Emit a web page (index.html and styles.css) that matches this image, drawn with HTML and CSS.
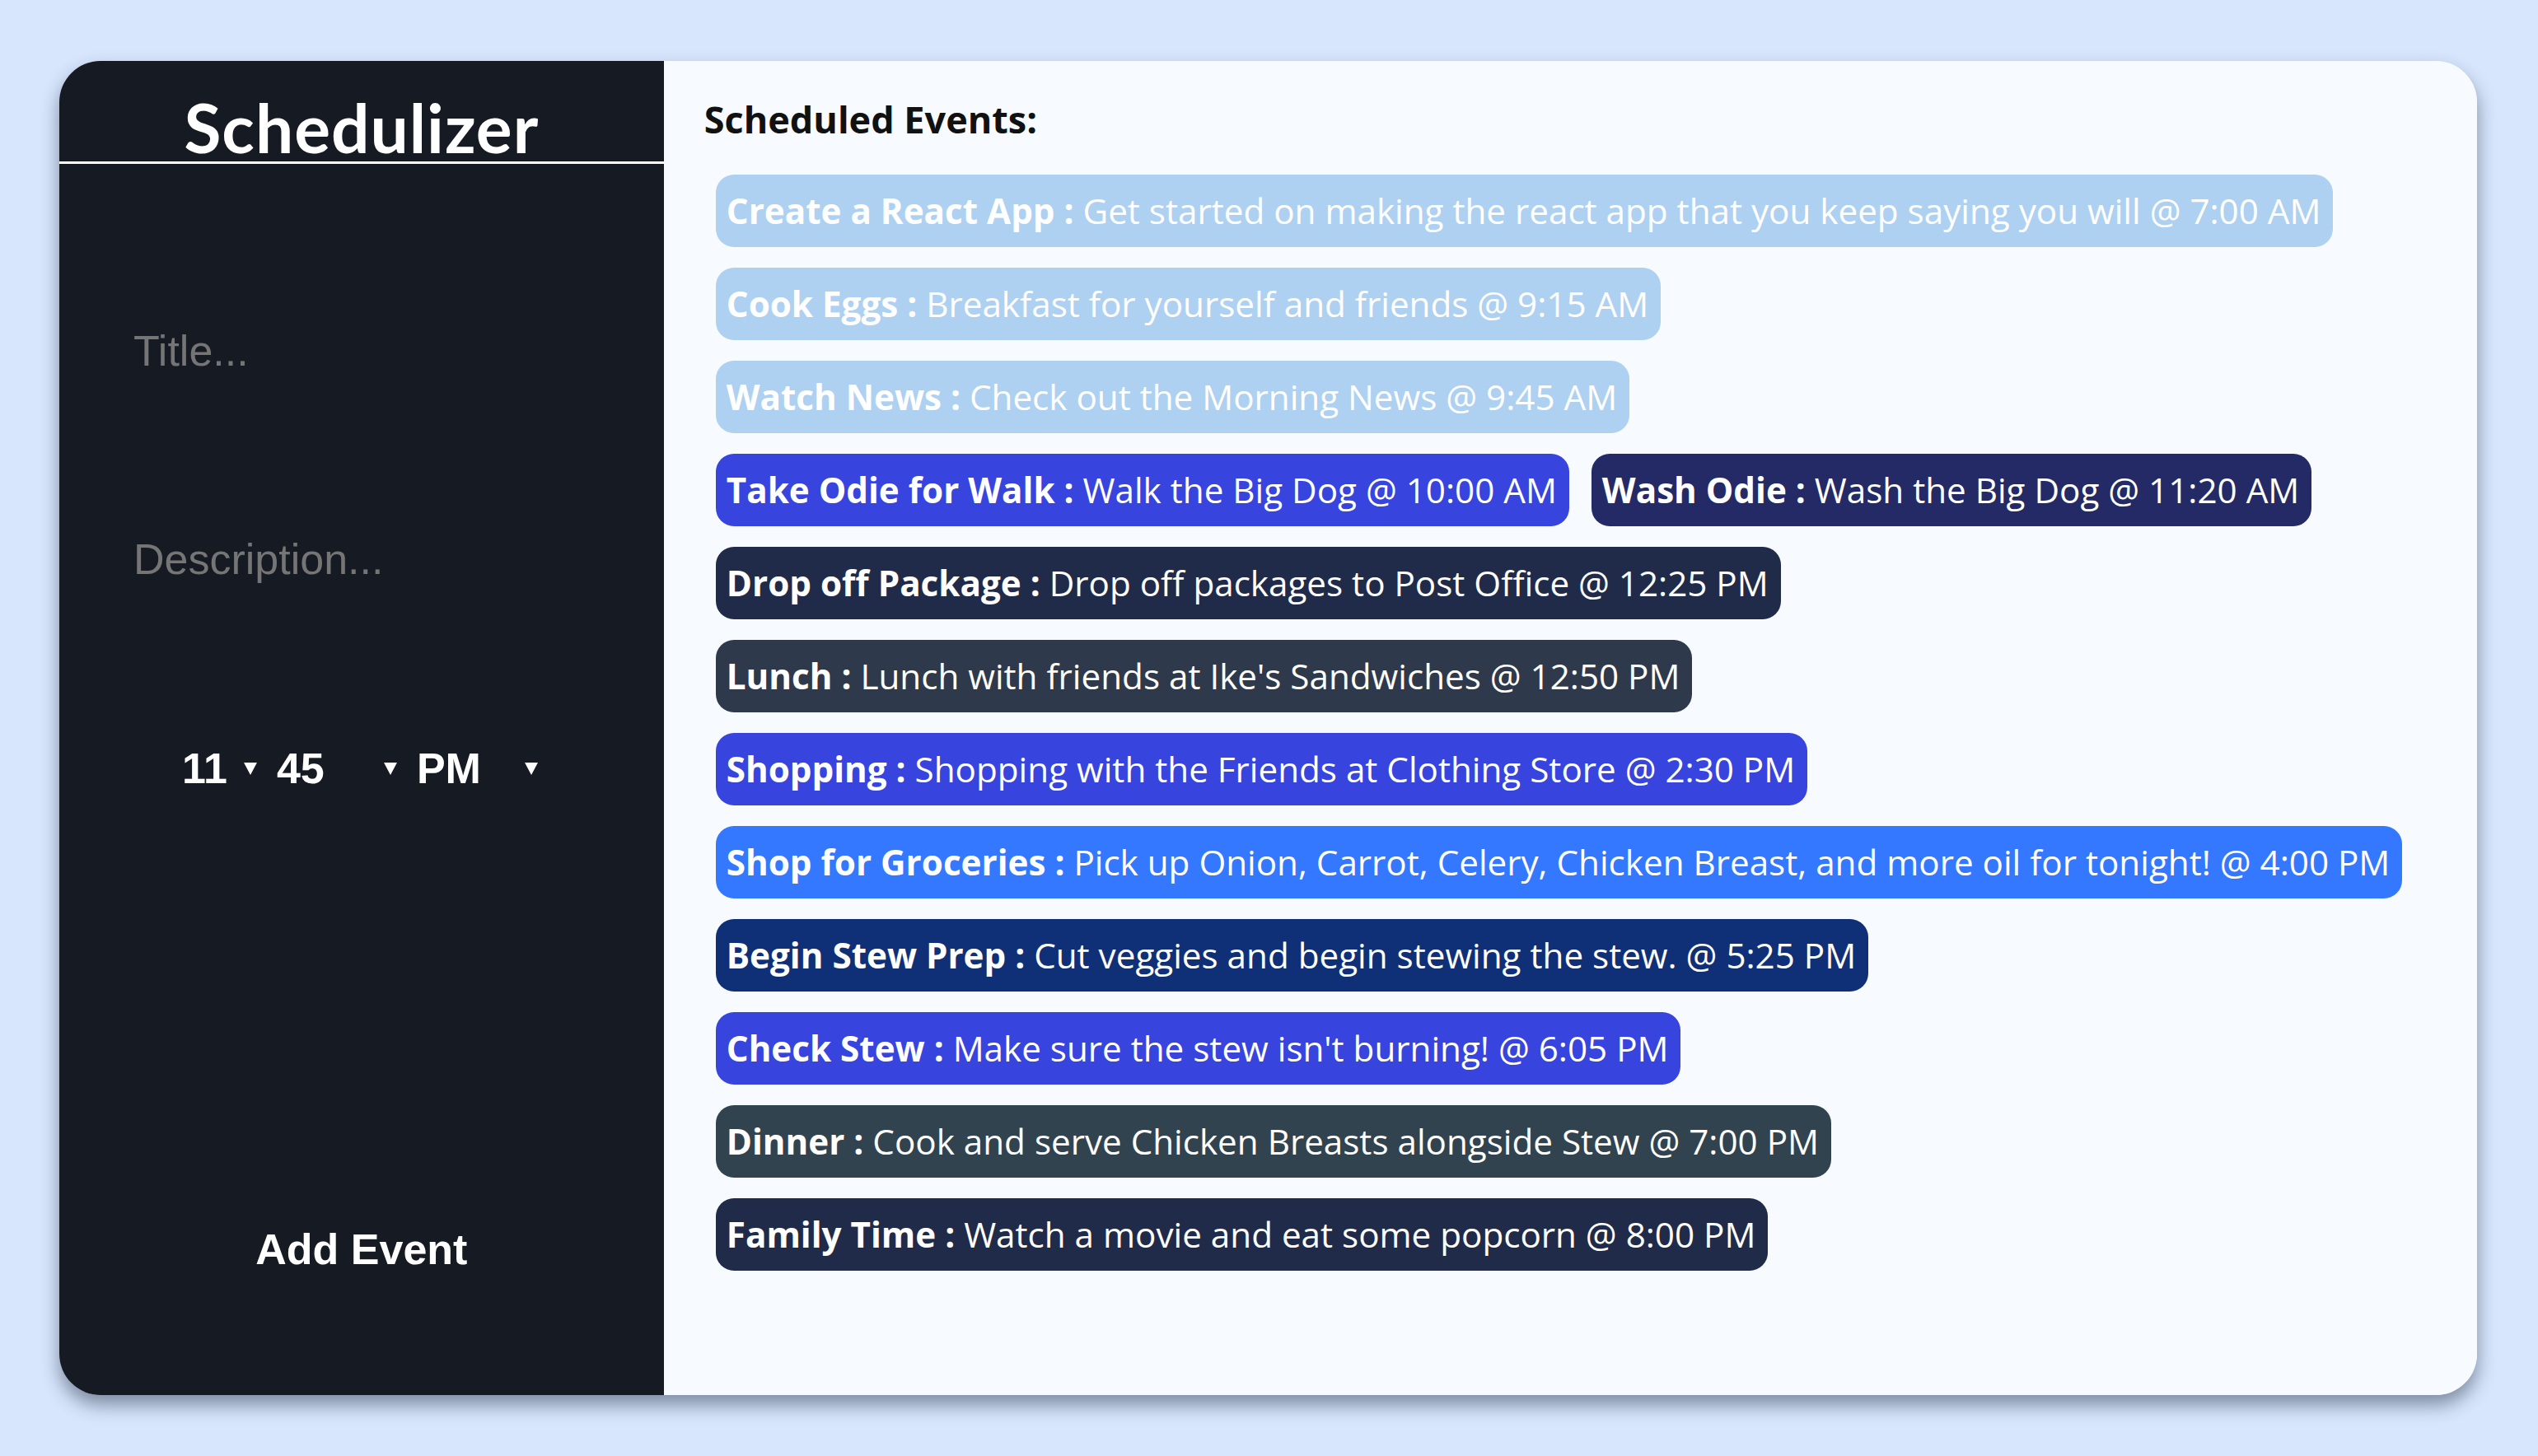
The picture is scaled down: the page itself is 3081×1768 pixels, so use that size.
FILE: index.html
```html
<!DOCTYPE html>
<html lang="en">
<head>
<meta charset="utf-8">
<title>Schedulizer</title>
<link rel="stylesheet" href="styles.css">
</head>
<body>
<div class="app">
  <aside class="sidebar">
    <header class="brand"><h1>Schedulizer</h1></header>
    <form class="form">
      <input class="field field-title" type="text" placeholder="Title...">
      <input class="field field-desc" type="text" placeholder="Description...">
      <div class="time-row">
        <div class="picker picker-h"><span>11</span><svg class="caret" viewBox="0 0 16 15"><path d="M0 0H16L8 15Z"/></svg></div>
        <div class="picker picker-m"><span>45</span><svg class="caret" viewBox="0 0 16 15"><path d="M0 0H16L8 15Z"/></svg></div>
        <div class="picker picker-p"><span>PM</span><svg class="caret" viewBox="0 0 16 15"><path d="M0 0H16L8 15Z"/></svg></div>
      </div>
      <button class="add" type="button">Add Event</button>
    </form>
  </aside>
  <main class="events">
    <h2 class="events-title">Scheduled Events:</h2>
    <div class="event-list">
      <div class="event c-light"><strong>Create a React App :</strong> Get started on making the react app that you keep saying you will @ 7:00 AM</div>
      <div class="event c-light"><strong>Cook Eggs :</strong> Breakfast for yourself and friends @ 9:15 AM</div>
      <div class="event c-light"><strong>Watch News :</strong> Check out the Morning News @ 9:45 AM</div>
      <div class="event c-indigo"><strong>Take Odie for Walk :</strong> Walk the Big Dog @ 10:00 AM</div>
      <div class="event c-navy"><strong>Wash Odie :</strong> Wash the Big Dog @ 11:20 AM</div>
      <div class="event c-slate"><strong>Drop off Package :</strong> Drop off packages to Post Office @ 12:25 PM</div>
      <div class="event c-steel"><strong>Lunch :</strong> Lunch with friends at Ike's Sandwiches @ 12:50 PM</div>
      <div class="event c-indigo"><strong>Shopping :</strong> Shopping with the Friends at Clothing Store @ 2:30 PM</div>
      <div class="event c-blue"><strong>Shop for Groceries :</strong> Pick up Onion, Carrot, Celery, Chicken Breast, and more oil for tonight! @ 4:00 PM</div>
      <div class="event c-deep"><strong>Begin Stew Prep :</strong> Cut veggies and begin stewing the stew. @ 5:25 PM</div>
      <div class="event c-indigo"><strong>Check Stew :</strong> Make sure the stew isn't burning! @ 6:05 PM</div>
      <div class="event c-teal"><strong>Dinner :</strong> Cook and serve Chicken Breasts alongside Stew @ 7:00 PM</div>
      <div class="event c-slate"><strong>Family Time :</strong> Watch a movie and eat some popcorn @ 8:00 PM</div>
    </div>
  </main>
</div>
</body>
</html>
```
FILE: styles.css
```css
* { box-sizing: border-box; }

html, body { margin: 0; }

body {
  background: #d7e6fd;
  padding: 74px 74px 74px 72px;
  height: 1768px;
  font-family: "Open Sans", "Noto Sans", sans-serif;
}

.app {
  display: flex;
  height: 1620px;
  border-radius: 50px;
  overflow: hidden;
  box-shadow: 0 12px 22px rgba(20, 30, 50, 0.45);
}

/* Sidebar */
.sidebar {
  width: 25%;
  flex: 0 0 25%;
  background: #161a23;
  display: flex;
  flex-direction: column;
}

.brand {
  padding: 40px 0 2px;
  border-bottom: 3px solid #ffffff;
}

.brand h1 {
  margin: 0;
  text-align: center;
  color: #ffffff;
  font-family: "Lato", "Open Sans", sans-serif;
  font-weight: 700;
  font-size: 82px;
  line-height: 80px;
  letter-spacing: 1px;
}

.form {
  display: flex;
  flex-direction: column;
  padding-top: 197px;
}

.field {
  display: block;
  margin: 0 0 0 90px;
  padding: 0;
  width: 560px;
  height: 60px;
  border: none;
  outline: none;
  background: transparent;
  color: #ffffff;
  font-family: "Liberation Sans", Arial, sans-serif;
  font-size: 52px;
  line-height: 60px;
}

.field::placeholder { color: #757575; }

.field-desc { margin-top: 193px; }

.time-row {
  margin-top: 194px;
  height: 60px;
  display: flex;
  justify-content: center;
  gap: 20px;
  color: #ffffff;
  font-family: "Liberation Sans", Arial, sans-serif;
  font-weight: 700;
  font-size: 52px;
  line-height: 60px;
}

.picker {
  display: flex;
  align-items: center;
  justify-content: space-between;
  padding-right: 4px;
}

.picker-h { width: 95px; }
.picker-m { width: 150px; }
.picker-p { width: 151px; }

.caret {
  width: 16px;
  height: 15px;
  fill: #ffffff;
}

.add {
  margin: 524px auto 0;
  padding: 0;
  height: 60px;
  border: none;
  background: transparent;
  color: #ffffff;
  font-family: "Liberation Sans", Arial, sans-serif;
  font-weight: 700;
  font-size: 52px;
  line-height: 60px;
}

/* Events panel */
.events {
  flex: 1;
  background: #f7fbff;
  padding: 41px 0 0 49px;
}

.events-title {
  margin: 0;
  height: 60px;
  color: #111111;
  font-weight: 700;
  font-size: 45px;
  line-height: 60px;
}

.event-list {
  margin: 37px 0 0 14px;
  width: 2100px;
  display: flex;
  flex-wrap: wrap;
  align-items: flex-start;
  gap: 25px 27px;
}

.event {
  color: #ffffff;
  font-size: 42.2px;
  line-height: 58px;
  padding: 15px 15px 15px 13px;
  border-radius: 22px;
  white-space: nowrap;
}

.event strong { font-weight: 700; }

.c-light { background: #aed1f2; }
.c-indigo { background: #3744de; }
.c-navy { background: #232a66; }
.c-slate { background: #1f2b49; }
.c-steel { background: #2e394c; }
.c-blue { background: #3378fe; }
.c-deep { background: #0f3077; }
.c-teal { background: #31434f; }
```
